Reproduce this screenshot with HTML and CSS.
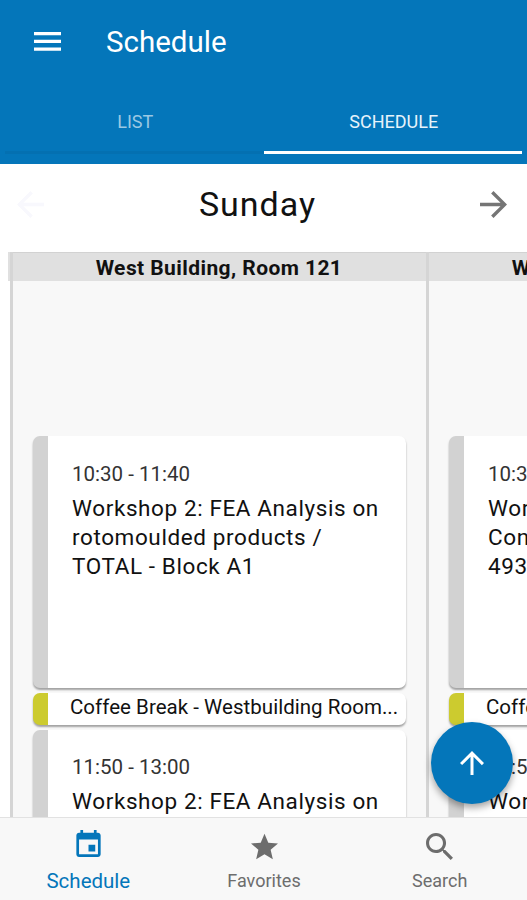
FILE: index.html
```html
<!DOCTYPE html>
<html lang="en">
<head>
    <meta charset="UTF-8">
    <meta name="viewport" content="width=device-width, initial-scale=1.0">
    <title>Schedule</title>
    <link rel="stylesheet" href="styles.css">
</head>
<body>
    <header class="header">
        <div class="toolbar">
            <svg class="menu-icon" viewBox="0 0 27 19" fill="currentColor">
                <path d="M0 0h27v3.3H0zM0 7.7h27V11H0zM0 15.4h27v3.3H0z"/>
            </svg>
            <h1>Schedule</h1>
        </div>
        <nav class="tabs">
            <a class="tab">LIST</a>
            <a class="tab active">SCHEDULE</a>
        </nav>
    </header>

    <div class="day-bar">
        <svg class="arrow disabled" viewBox="4 4 16 16" fill="currentColor">
            <path d="M20 11H7.83l5.59-5.59L12 4l-8 8 8 8 1.41-1.41L7.83 13H20z"/>
        </svg>
        <h2>Sunday</h2>
        <svg class="arrow" viewBox="4 4 16 16" fill="currentColor">
            <path d="M12 4l-1.41 1.41L16.17 11H4v2h12.17l-5.58 5.59L12 20l8-8z"/>
        </svg>
    </div>

    <main class="schedule">
        <section class="room">
            <h3>West Building, Room 121</h3>
            <div class="events">
                <article class="event">
                    <time>10:30 - 11:40</time>
                    <p>Workshop 2: FEA Analysis on rotomoulded products / TOTAL - Block A1</p>
                </article>
                <article class="event break">
                    <p>Coffee Break - Westbuilding Room...</p>
                </article>
                <article class="event">
                    <time>11:50 - 13:00</time>
                    <p>Workshop 2: FEA Analysis on</p>
                </article>
            </div>
        </section>
        <section class="room">
            <h3>West Building, Room 122</h3>
            <div class="events">
                <article class="event">
                    <time>10:30 - 11:40</time>
                    <p>Workshop 3:<br>Control<br>493</p>
                </article>
                <article class="event break">
                    <p>Coffee Break - Westbuilding Room...</p>
                </article>
                <article class="event">
                    <time>11:50 - 13:00</time>
                    <p>Workshop 3:</p>
                </article>
            </div>
        </section>
    </main>

    <button class="fab" aria-label="Up">
        <svg viewBox="4 4 16 16" fill="currentColor">
            <path d="M4 12l1.41 1.41L11 7.83V20h2V7.83l5.58 5.59L20 12l-8-8-8 8z"/>
        </svg>
    </button>

    <nav class="bottom-nav">
        <a class="nav-item active">
            <svg viewBox="3 1 18 20" fill="currentColor">
                <path d="M17 12h-5v5h5v-5zM16 1v2H8V1H6v2H5c-1.11 0-1.99.9-1.99 2L3 19c0 1.1.89 2 2 2h14c1.1 0 2-.9 2-2V5c0-1.1-.9-2-2-2h-1V1h-2zm3 18H5V8h14v11z"/>
            </svg>
            <span>Schedule</span>
        </a>
        <a class="nav-item">
            <svg viewBox="2 2 20 19" fill="currentColor">
                <path d="M12 17.27L18.18 21l-1.64-7.03L22 9.24l-7.19-.61L12 2 9.19 8.63 2 9.24l5.46 4.73L5.82 21z"/>
            </svg>
            <span>Favorites</span>
        </a>
        <a class="nav-item">
            <svg viewBox="3 3 17.5 17.5" fill="currentColor">
                <path d="M15.5 14h-.79l-.28-.27C15.41 12.59 16 11.11 16 9.5 16 5.91 13.09 3 9.5 3S3 5.91 3 9.5 5.91 16 9.5 16c1.61 0 3.09-.59 4.23-1.57l.27.28v.79l5 4.99L20.49 19l-4.99-5zm-6 0C7.01 14 5 11.99 5 9.5S7.01 5 9.5 5 14 7.01 14 9.5 11.99 14 9.5 14z"/>
            </svg>
            <span>Search</span>
        </a>
    </nav>
</body>
</html>
```

FILE: styles.css
```css
* {
    box-sizing: border-box;
}
body {
    margin: 0;
    height: 900px;
    display: flex;
    flex-direction: column;
    overflow: hidden;
    font-family: Roboto, sans-serif;
    background-color: white;
    color: #111;
}
h1, h2, h3, p {
    margin: 0;
}
.header {
    flex: none;
    height: 163.5px;
    background-color: #0476ba;
    color: white;
}
.toolbar {
    display: flex;
    align-items: center;
    height: 82px;
    padding-left: 34px;
}
.menu-icon {
    width: 27px;
    height: 19px;
}
h1 {
    margin-left: 45px;
    padding-top: 2px;
    font-size: 29.5px;
    font-weight: 400;
    line-height: 34px;
}
.tabs {
    display: flex;
    height: 72px;
    padding: 0 5px;
}
.tab {
    flex: 1;
    padding: 28px 0 0 2px;
    border-bottom: 3px solid #0470b1;
    text-align: center;
    font-size: 18px;
    line-height: 23px;
    color: #9bc8e3;
}
.tab.active {
    border-bottom-color: white;
    color: #e6f3fb;
}
.day-bar {
    flex: none;
    display: flex;
    align-items: center;
    justify-content: space-between;
    height: 88px;
    padding: 0 20px 7px 17px;
}
.day-bar h2 {
    padding-right: 9px;
    font-size: 34px;
    font-weight: 400;
    letter-spacing: 1px;
}
.arrow {
    width: 27px;
    height: 27px;
    color: #757575;
}
.arrow.disabled {
    color: #f8f8fd;
}
.schedule {
    flex: 1;
    min-height: 0;
    display: flex;
    overflow: hidden;
    margin-left: 8px;
    padding-left: 2px;
    background: linear-gradient(#e0e0e0 29px, white 29px);
}
.room {
    flex: none;
    width: 416px;
    border-left: 3px solid #d5d5d5;
    background-color: #f8f8f8;
}
.room h3 {
    height: 29px;
    padding-right: 1px;
    border-top: 1px solid #d2d2d2;
    background-color: #e0e0e0;
    text-align: center;
    font-size: 21px;
    font-weight: 700;
    line-height: 31px;
    letter-spacing: 0.42px;
}
.events {
    padding: 155px 20px 0;
}
.event {
    height: 252px;
    margin-bottom: 5px;
    padding: 24px 10px 0 24px;
    border-left: 15px solid #d2d2d2;
    border-radius: 7px;
    background-color: white;
    box-shadow: 0 2px 2px rgba(0, 0, 0, 0.35);
    font-size: 22.5px;
    line-height: 29px;
    letter-spacing: 0.6px;
}
.event + .break + .event {
    padding-top: 23px;
}
.event time {
    display: block;
    margin-bottom: 5px;
    font-size: 20.5px;
    letter-spacing: 0;
    color: #333;
}
.event p {
    max-width: 312px;
}
.event.break {
    height: 32px;
    padding: 0 0 0 22px;
    border-left-color: #cccb2f;
    font-size: 20.5px;
    letter-spacing: 0.03px;
}
.event.break p {
    max-width: none;
    white-space: nowrap;
}
.fab {
    position: absolute;
    top: 722px;
    left: 431px;
    width: 82px;
    height: 82px;
    display: flex;
    align-items: center;
    justify-content: center;
    padding: 0;
    border: none;
    border-radius: 50%;
    background-color: #0476ba;
    color: white;
    box-shadow: 0 4px 7px rgba(0, 0, 0, 0.35);
}
.fab svg {
    width: 24px;
    height: 24px;
}
.bottom-nav {
    flex: none;
    display: flex;
    height: 83px;
    border-top: 1px solid #e2e2e2;
    background-color: #f8f8f8;
    position: relative;
}
.nav-item {
    flex: 1;
    display: flex;
    flex-direction: column;
    align-items: center;
    justify-content: flex-end;
    padding: 0 0 7px 1px;
    font-size: 18px;
    line-height: 24px;
    color: #6d6d6d;
}
.nav-item svg {
    width: 27px;
    height: 27px;
    margin-bottom: 9px;
}
.nav-item.active {
    font-size: 20.5px;
    color: #0476ba;
}
.nav-item.active svg {
    margin-bottom: 12px;
}
```
